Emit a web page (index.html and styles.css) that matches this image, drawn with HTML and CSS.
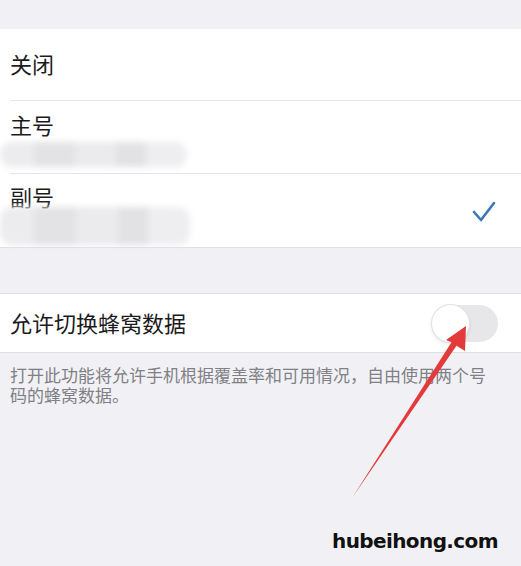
FILE: index.html
```html
<!DOCTYPE html>
<html>
  <head>
    <meta charset="utf-8">
    <title>蜂窝数据</title>
    <link rel="stylesheet" href="styles.css">
  </head>
  <body>
    <div class="page">
      <div class="gap-top"></div>

      <ul class="group">
        <li class="row">
          <div class="row-body">
            <span class="label">关闭</span>
          </div>
        </li>
        <li class="row row-tall">
          <div class="row-body sim">
            <span class="label">主号</span>
            <span class="masked masked-a"></span>
          </div>
        </li>
        <li class="row row-tall">
          <div class="row-body sim sim-last">
            <div class="sim-text">
              <span class="label">副号</span>
              <span class="masked masked-b"></span>
            </div>
            <svg class="check" width="24" height="22" viewBox="0 0 24 22">
              <polyline points="2,11 9,19 22,2" fill="none" stroke="#3b78b6" stroke-width="2.6" stroke-linecap="round" stroke-linejoin="round"/>
            </svg>
          </div>
        </li>
      </ul>

      <div class="gap-mid"></div>

      <div class="group group-single">
        <div class="row row-switch">
          <span class="label">允许切换蜂窝数据</span>
          <span class="switch"><span class="knob"></span></span>
        </div>
      </div>

      <p class="footnote">打开此功能将允许手机根据覆盖率和可用情况，自由使用两个号码的蜂窝数据。</p>
    </div>

    <!-- annotation drawn on top of the screen -->
    <svg class="pointer" width="521" height="566" viewBox="0 0 521 566">
      <polygon points="352,498 451.5,342.3 446,340 466,326 465,351 456.5,345.7" fill="#e33b3b"/>
    </svg>
    <div class="stamp">hubeihong.com</div>
  </body>
</html>
```

FILE: styles.css
```css
body { margin: 0; background: #f1f1f5; font-family: "Noto Sans CJK SC", "Noto Sans", sans-serif; color: #1b1b1d; }

.page { width: 521px; height: 566px; overflow: hidden; }

.gap-top { height: 29px; }
.gap-mid { height: 45px; }

.group { list-style: none; margin: 0; padding: 0; background: #fff; border-bottom: 1px solid #dedee3; }
.group-single { border-top: 1px solid #dedee3; }

.row { padding-left: 10px; }
.row-body { display: flex; align-items: center; height: 72px; padding-bottom: 4px; box-sizing: border-box; border-bottom: 1px solid #e6e6ea; }
.row-tall .row-body { height: 73px; }
.row:last-child .row-body { border-bottom: none; }

.label { font-size: 22px; line-height: 26px; }

.sim { flex-direction: column; align-items: flex-start; justify-content: flex-start; padding: 10px 0 0; }
.sim-last { flex-direction: row; align-items: center; justify-content: space-between; padding: 0 25px 0 0; }
.sim-text { display: flex; flex-direction: column; align-items: flex-start; padding-top: 9px; align-self: flex-start; }

/* redacted phone numbers */
.masked { display: block; margin-left: -10px; border-radius: 12px; filter: blur(3px);
  background: linear-gradient(90deg, #ececee 0 18%, #e3e3e5 18% 40%, #ebebed 40% 62%, #e2e2e4 62% 78%, #eeeef0 78%); }
.masked-a { width: 187px; height: 25px; margin-top: 5px; }
.masked-b { width: 190px; height: 38px; margin-top: -2px; }

.check { display: block; margin-top: 2px; }

.row-switch { display: flex; align-items: center; justify-content: space-between; height: 58px; padding: 0 23px 3px 10px; box-sizing: border-box; }
.switch { position: relative; width: 66px; height: 37px; margin-top: 3px; border-radius: 19px; background: #e7e7ea; }
.knob { position: absolute; left: 0; top: 0; width: 37px; height: 37px; border-radius: 50%; background: #fff; box-shadow: 0 0 0 1px #e2e2e6, 0 2px 4px rgba(0, 0, 0, 0.12); }

.footnote { margin: 0; padding: 12px 25px 0 10px; font-size: 17px; line-height: 20px; color: #808085; }

.pointer { position: absolute; left: 0; top: 0; filter: blur(0.4px); }
.stamp { position: absolute; left: 332px; top: 529px; font-family: "DejaVu Sans", sans-serif; font-weight: 800; font-size: 20px; letter-spacing: -0.6px; color: #111; }
```
